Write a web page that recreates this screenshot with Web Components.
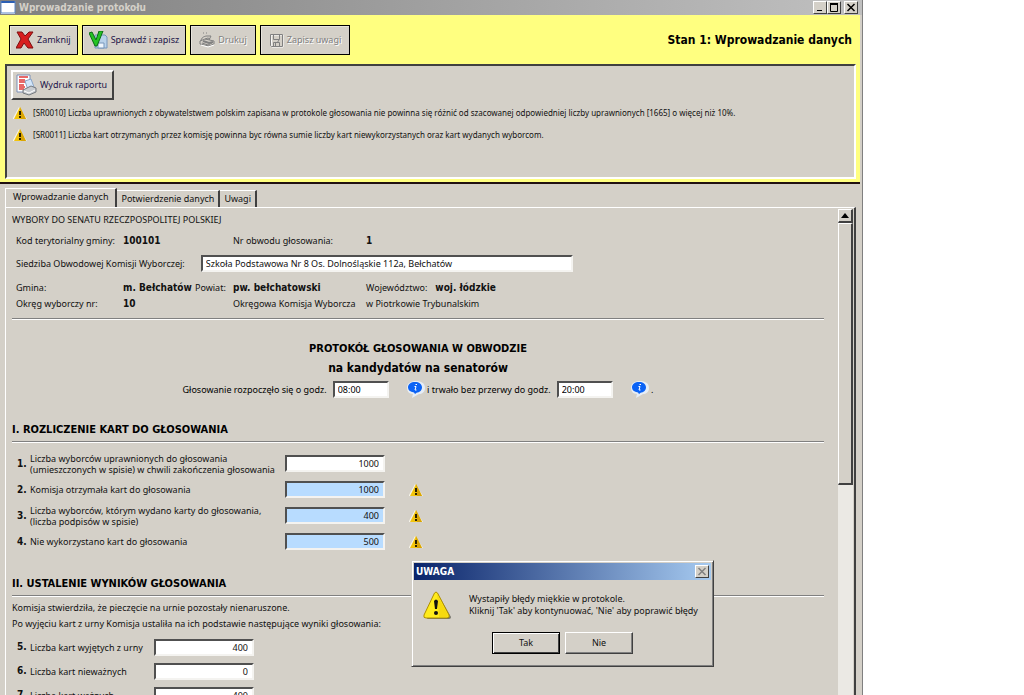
<!DOCTYPE html>
<html lang="pl">
<head>
<meta charset="utf-8">
<title>Wprowadzanie protokołu</title>
<style>
  html, body { height: 100%; margin: 0; }
  body {
    --face: #d4d0c8;
    --shadow: #808080;
    --dark: #404040;
    --bold: bold 10px/12px "DejaVu Sans Condensed", "DejaVu Sans", sans-serif;
    --head: bold 11px/14px "DejaVu Sans Condensed", "DejaVu Sans", sans-serif;
    --large: bold 12px/16px "DejaVu Sans Condensed", "DejaVu Sans", sans-serif;
    background: #fff;
    color: #111;
    font: 9px/12px "Noto Sans", "Open Sans", sans-serif;
    overflow: hidden;
  }
</style>
</head>
<body>
<app-window heading="Wprowadzanie protokołu">
  <action-bar slot="top" state="Stan 1: Wprowadzanie danych">
    <tool-button icon="close" label="Zamknij"></tool-button>
    <tool-button icon="check" label="Sprawdź i zapisz"></tool-button>
    <tool-button icon="print" label="Drukuj" disabled></tool-button>
    <tool-button icon="save" label="Zapisz uwagi" disabled></tool-button>
  </action-bar>
  <message-panel slot="top">
    <message-line>[SR0010] Liczba uprawnionych z obywatelstwem polskim zapisana w protokole głosowania nie powinna się różnić od szacowanej odpowiedniej liczby uprawnionych [1665] o więcej niż 10%.</message-line>
    <message-line>[SR0011] Liczba kart otrzymanych przez komisję powinna byc równa sumie liczby kart niewykorzystanych oraz kart wydanych wyborcom.</message-line>
  </message-panel>
  <tab-strip></tab-strip>
  <scroll-panel>
    <commission-info></commission-info>
    <protocol-heading></protocol-heading>
    <form-section heading="I. ROZLICZENIE KART DO GŁOSOWANIA">
      <count-field number="1." value="1000">Liczba wyborców uprawnionych do głosowania<br>(umieszczonych w spisie) w chwili zakończenia głosowania</count-field>
      <count-field number="2." value="1000" flagged>Komisja otrzymała kart do głosowania</count-field>
      <count-field number="3." value="400" flagged>Liczba wyborców, którym wydano karty do głosowania,<br>(liczba podpisów w spisie)</count-field>
      <count-field number="4." value="500" flagged>Nie wykorzystano kart do głosowania</count-field>
    </form-section>
    <form-section heading="II. USTALENIE WYNIKÓW GŁOSOWANIA" compact>
      <span slot="intro">Komisja stwierdziła, że pieczęcie na urnie pozostały nienaruszone.</span>
      <span slot="intro">Po wyjęciu kart z urny Komisja ustaliła na ich podstawie następujące wyniki głosowania:</span>
      <count-field number="5." value="400" narrow>Liczba kart wyjętych z urny</count-field>
      <count-field number="6." value="0" narrow>Liczba kart nieważnych</count-field>
      <count-field number="7." value="400" narrow>Liczba kart ważnych</count-field>
    </form-section>
  </scroll-panel>
</app-window>
<alert-dialog heading="UWAGA">Wystapiły błędy miękkie w protokole.<br>Kliknij 'Tak' aby kontynuować, 'Nie' aby poprawić błędy</alert-dialog>

<script>
const reset = `
  :host, *, *::before, *::after { box-sizing: border-box; }
  button, input { font: inherit; color: inherit; margin: 0; border-radius: 0; }
  b { font: var(--bold); }
  svg { display: block; flex: none; }
`;

const define = (name, render) => customElements.define(name, class extends HTMLElement {
  connectedCallback() {
    if (this.shadowRoot) return;
    const template = document.createElement('template');
    template.innerHTML = render(this);
    this.attachShadow({ mode: 'open' }).append(template.content.cloneNode(true));
  }
});

const icons = {
  close: `<svg width="18" height="18" viewBox="0 0 18 18"><path d="M1 1h5l3 4 4-4h4l-5 7 5 9h-5l-4-5-3 5H0l5-9z" fill="#d81e1e" stroke="#7c1010"/></svg>`,
  check: `<svg width="19" height="18" viewBox="0 0 19 18"><path d="M6 4h10l2 2v11H6z" fill="#b9d2ea" stroke="#7796bb"/><path d="M9 12h6v5H9z" fill="#eef5fc" stroke="#7796bb"/><path d="M0 2l3-1 4 8 3-9h4L8 15H6z" fill="#24c424" stroke="#0b6b16"/></svg>`,
  print: `<svg width="16" height="16" viewBox="0 0 16 16" fill="none" stroke="#808080"><path d="M4 1h1M7 1h1M2 9c0-3 3-5 6-5h4l-2 4M1 9l5-2 9 2v3l-5 2-9-2zM3 11l6 2 4-2M6 7l3-1 2 1"/><path d="M4 9l6 2 4-1" stroke-width="2"/><path d="M2 13l7 2 6-2" stroke="#fff"/></svg>`,
  save: `<svg width="15" height="15" viewBox="0 0 15 15" fill="none"><path d="M2 2h12v12H3z" stroke="#fff"/><path d="M1.500 1.500h12v12h-11l-1-1zM4.500 1.500v5h6v-5M4.500 13.500v-4h6v4M6.500 10v3M10 7l-2 3" stroke="#808080"/></svg>`,
  report: `<svg width="21" height="22" viewBox="0 0 21 22"><path d="M1 1h13v17H1z" fill="#fff" stroke="#7c8fb5"/><path d="M3 3h9M3 6h6M3 8h8M3 11h5M3 13h6M3 15h5" stroke="#e03838" stroke-width="1.5"/><path d="M9 7l6-2 3 8-6 3z" fill="#d2e6fa" stroke="#8aa5c8"/><path d="M7 16l8-4 5 2v4l-7 3-6-2z" fill="#c8ccd0" stroke="#74797e"/><path d="M8 17l5 2 6-3" fill="none" stroke="#fff"/></svg>`
};

define('warn-icon', el => el.hasAttribute('large')
  ? `<style>:host{display:block}svg{display:block}</style>
  <svg width="28" height="28" viewBox="0 0 28 28" role="img" aria-label="Ostrzeżenie">
    <path d="M15 3L28 26q0 2-2 2H4z" fill="#77756c"/>
    <path d="M11.5 2q1.500-2 3 0L26 24q1 3-2 3H3q-3 0-2-3z" fill="#ffec1c" stroke="#b09000"/>
    <path d="M14 3l11 21q0 2-2 2h-7z" fill="#f0c800" opacity=".5"/>
    <path d="M11 10q2-3 4 0l-1 8h-2z" fill="#111"/><circle cx="13" cy="22" r="2" fill="#111"/>
  </svg>`
  : `<style>:host{display:block}svg{display:block}</style>
  <svg width="14" height="14" viewBox="0 0 14 14" role="img" aria-label="Ostrzeżenie">
    <path d="M6 1L0 12v1h14z" fill="#f6f4ea"/>
    <path d="M7 1l6 12H1z" fill="#f2c40e"/>
    <path d="M7 1l6 12H8z" fill="#d9a404"/>
    <path d="M7 5v4M7 10v2" stroke="#2a2000" stroke-width="2"/>
  </svg>`);

define('info-icon', () => `<style>:host{display:block}svg{display:block}</style>
  <svg width="18" height="17" viewBox="0 0 18 17" role="img" aria-label="Informacja">
    <path d="M9 0c5 0 9 2 9 7 0 4-3 6-6 6l-7 4 1-4C2 13 0 10 0 7c0-5 4-7 9-7z" fill="#e6edf6"/>
    <path d="M8 1c4 0 7 2 7 5.500 0 3-3 5-5 5L8 13l-1-1.500C3 11 1 9 1 6.500 1 3 4 1 8 1z" fill="#0a62f5"/>
    <path d="M8.500 3.500H10M7.500 5.500H9L8 9h1.500" fill="none" stroke="#fff"/>
  </svg>`);

define('app-window', el => `<style>${reset}
  :host { display: flex; flex-direction: column; height: 100vh; margin-right: 161px; background: var(--face); border-right: 1px solid var(--shadow); }
  header { flex: none; display: flex; align-items: center; gap: 3px; height: 15px; padding-right: 4px; background: linear-gradient(90deg, #808080, #c0c0c0); color: var(--face); }
  h1 { flex: 1; margin: 0; font: var(--bold); }
  .buttons { display: flex; }
  .buttons button { width: 14px; height: 13px; padding: 0; display: grid; place-items: center; background: var(--face); border: 1px solid; border-color: #fff var(--dark) var(--dark) #fff; }
  .buttons button:last-child { margin-left: 3px; }
  .top { flex: none; margin-right: 2px; padding: 10px 4px 3px 5px; background: #ffff80; border-bottom: 2px solid #201010; }
  main { flex: 1; min-height: 0; display: flex; flex-direction: column; padding: 4px 6px 0 5px; overflow: hidden; }
</style>
<header>
  <svg width="16" height="14"><path d="M1 0h14v13H1z" fill="#fff"/><path d="M1 0h14v2H1z" fill="#2b5fb4"/><path d="M1 0v12h14V0" fill="none" stroke="#5c86c4"/></svg>
  <h1>${el.getAttribute('heading')}</h1>
  <div class="buttons">
    <button aria-label="Minimalizuj"><svg width="10" height="9"><path d="M2 7.500h5" stroke="#000"/></svg></button>
    <button aria-label="Maksymalizuj"><svg width="10" height="9"><path d="M1 1h8M1.500 1v7.500h7V1" fill="none" stroke="#000"/><path d="M1 1h8" stroke="#000" stroke-width="2"/></svg></button>
    <button aria-label="Zamknij okno"><svg width="10" height="9"><path d="M1.500 1l7 7M8.500 1l-7 7" stroke="#000" stroke-width="1.500"/></svg></button>
  </div>
</header>
<div class="top"><slot name="top"></slot></div>
<main><slot></slot></main>`);

define('action-bar', el => `<style>${reset}
  :host { display: flex; align-items: center; gap: 4px; margin-bottom: 9px; padding: 0 4px; }
  h2 { flex: 1; margin: 0; text-align: right; font: var(--large); color: #000; white-space: nowrap; }
</style><slot></slot><h2>${el.getAttribute('state')}</h2>`);

define('tool-button', el => `<style>${reset}
  :host { display: block; }
  button { display: flex; align-items: center; gap: 3px; height: 30px; padding: 0 6px; background: var(--face); border: 1px solid #000; color: #1c1448; white-space: nowrap; box-shadow: inset 1px 1px #e8e5dd; }
  button:disabled { padding: 0 8px; color: var(--shadow); text-shadow: 1px 1px #fff; }
  :host([raised]) button { border: 2px solid; border-color: #fff var(--dark) var(--dark) #fff; padding: 0 5px 0 3px; box-shadow: none; }
</style><button ${el.hasAttribute('disabled') ? 'disabled' : ''}>${icons[el.getAttribute('icon')]}<span>${el.getAttribute('label')}</span></button>`);

define('message-panel', () => `<style>${reset}
  :host { display: block; height: 115px; padding: 4px; background: var(--face); border: 2px solid; border-color: var(--dark) #fff #fff var(--dark); }
  .list { display: grid; gap: 8px; margin-top: 6px; }
  tool-button { width: max-content; }
</style><tool-button raised icon="report" label="Wydruk raportu"></tool-button><div class="list"><slot></slot></div>`);

define('message-line', () => `<style>${reset}
  :host { display: flex; align-items: center; gap: 6px; height: 14px; padding-left: 2px; white-space: nowrap; font-size: 8px; }
</style><warn-icon></warn-icon><span><slot></slot></span>`);

define('tab-strip', () => `<style>${reset}
  :host { flex: none; display: flex; align-items: flex-end; }
  button { height: 17px; padding: 0 4px; background: var(--face); border: solid; border-width: 1px 2px 0 0; border-color: #fff var(--dark) #fff #fff; white-space: nowrap; }
  button[aria-selected=true] { height: 19px; padding: 0 7px 2px; border-left-width: 1px; }
</style>
<button role="tab" aria-selected="true">Wprowadzanie danych</button><button role="tab" aria-selected="false">Potwierdzenie danych</button><button role="tab" aria-selected="false">Uwagi</button>`);

define('scroll-panel', () => `<style>${reset}
  :host { flex: 1; min-height: 0; display: flex; border: solid; border-width: 1px 2px 0 1px; border-color: #fff var(--dark) #fff #fff; }
  .content { flex: 1; min-width: 0; padding: 6px 14px 0 6px; overflow: hidden; }
  .bar { flex: none; width: 15px; margin: 1px 1px 0 0; display: flex; flex-direction: column; background: #ebe9e4; }
  .bar button { height: 14px; padding: 0; display: grid; place-items: center; }
  .bar button, .thumb { background: var(--face); border: solid; border-width: 1px 2px 2px 1px; border-color: #fff var(--dark) var(--dark) #fff; }
  .thumb { height: 54%; }
</style>
<div class="content"><slot></slot></div>
<div class="bar"><button aria-label="Przewiń w górę"><svg width="8" height="5"><path d="M4 0l4 5H0z" fill="#000"/></svg></button><div class="thumb"></div></div>`);

const sunken = `border: 2px solid; border-color: #505050 #f4f3f0 #f4f3f0 #505050;`;

define('commission-info', () => `<style>${reset}
  :host { display: block; border-bottom: 1px solid #fff; white-space: nowrap; }
  .inner { border-bottom: 1px solid var(--shadow); padding-bottom: 8px; }
  h3 { margin: 0 0 9px; font: inherit; }
  .row { display: grid; grid-template-columns: 107px 72px 38px 133px auto; padding-left: 4px; margin-bottom: 4px; }
  .seat { display: flex; align-items: center; gap: 16px; padding-left: 4px; margin: 8px 0 10px; }
  .row:last-child { margin: 0; }
  input { width: 372px; height: 17px; padding: 0 3px; background: #fff; ${sunken} }
  .wide { grid-column: span 2; }
  .pair { display: flex; gap: 8px; }
</style>
<div class="inner">
  <h3>WYBORY DO SENATU RZECZPOSPOLITEJ POLSKIEJ</h3>
  <div class="row"><span>Kod terytorialny gminy:</span><b class="wide">100101</b><span>Nr obwodu głosowania:</span><b>1</b></div>
  <div class="seat"><label for="seat">Siedziba Obwodowej Komisji Wyborczej:</label><input id="seat" value="Szkoła Podstawowa Nr 8 Os. Dolnośląskie 112a, Bełchatów"></div>
  <div class="row"><span>Gmina:</span><b>m. Bełchatów</b><span>Powiat:</span><b>pw. bełchatowski</b><span class="pair">Województwo: <b>woj. łódzkie</b></span></div>
  <div class="row"><span>Okręg wyborczy nr:</span><b class="wide">10</b><span>Okręgowa Komisja Wyborcza</span><span>w Piotrkowie Trybunalskim</span></div>
</div>`);

define('protocol-heading', () => `<style>${reset}
  :host { display: block; padding-top: 22px; text-align: center; white-space: nowrap; color: #000; }
  h2 { margin: 0 0 4px; font: var(--head); }
  h3 { margin: 0 0 5px; font: var(--large); }
  .times { display: flex; justify-content: center; align-items: center; }
  input { width: 56px; height: 17px; margin: 0 18px 0 6px; padding: 0 3px; background: #fff; ${sunken} }
</style>
<h2>PROTOKÓŁ GŁOSOWANIA W OBWODZIE</h2>
<h3>na kandydatów na senatorów</h3>
<div class="times"><label for="from">Głosowanie rozpoczęło się o godz.</label><input id="from" value="08:00"><info-icon></info-icon><label for="to">&nbsp;i trwało bez przerwy do godz.</label><input id="to" value="20:00"><info-icon></info-icon><span>&nbsp;.</span></div>`);

define('form-section', el => `<style>${reset}
  :host { display: block; margin-top: 25px; }
  h2 { margin: 0; padding-bottom: 4px; font: var(--head); color: #000; border-bottom: 1px solid var(--shadow); }
  .intro { display: grid; gap: 4px; padding-top: 8px; border-top: 1px solid #fff; white-space: nowrap; }
  .rows { display: grid; gap: 1px; }
  :host([compact]) { margin-top: 23px; }
  :host([compact]) .intro { padding: 5px 0; }
  :host([compact]) .rows { gap: 0; }
</style>
<h2>${el.getAttribute('heading')}</h2><div class="intro"><slot name="intro"></slot></div><div class="rows"><slot></slot></div>`);

define('count-field', el => `<style>${reset}
  :host { display: grid; grid-template-columns: 13px 255px 100px auto; align-items: center; height: 25px; padding-left: 5px; white-space: nowrap; }
  :host([narrow]) { grid-template-columns: 13px 124px 100px auto; height: 24px; }
  label { line-height: 11px; }
  input { width: 100%; height: 17px; padding: 0 4px; text-align: right; background: #fff; ${sunken} }
  :host([flagged]) input { background: #b8dcff; }
  warn-icon { margin-left: 24px; }
</style>
<b>${el.getAttribute('number')}</b><label for="value"><slot></slot></label><input id="value" value="${el.getAttribute('value')}">${el.hasAttribute('flagged') ? '<warn-icon></warn-icon>' : ''}`);

define('alert-dialog', el => `<style>${reset}
  :host { position: absolute; left: 411px; top: 560px; width: 303px; padding: 2px; background: var(--face); border: 1px solid; border-color: var(--face) var(--dark) var(--dark) var(--face); box-shadow: inset 1px 1px #fff, inset -1px -1px var(--shadow); }
  header { display: flex; align-items: center; height: 17px; padding: 0 2px; background: linear-gradient(90deg, #0a246a, #a6caf0); color: #fff; }
  h2 { flex: 1; margin: 0; font: var(--bold); }
  header button { width: 14px; height: 13px; padding: 0; display: grid; place-items: center; background: var(--face); border: 1px solid; border-color: #fff var(--dark) var(--dark) #fff; }
  .body { display: flex; align-items: center; gap: 18px; padding: 11px 0 0 9px; }
  p { margin: 0; white-space: nowrap; }
  .actions { display: flex; justify-content: center; gap: 5px; padding: 13px 0 10px; }
  .actions button { width: 68px; height: 22px; padding: 0; background: var(--face); border: 1px solid; border-color: #fff var(--dark) var(--dark) #fff; box-shadow: inset -1px -1px var(--shadow); }
  .actions .default { border-color: #000; box-shadow: inset 1px 1px #fff, inset -1px -1px var(--dark); }
</style>
<header><h2>${el.getAttribute('heading')}</h2><button aria-label="Zamknij"><svg width="10" height="9"><path d="M1.500 1l7 7M8.500 1l-7 7" stroke="#808080" stroke-width="1.500"/></svg></button></header>
<div class="body"><warn-icon large></warn-icon><p><slot></slot></p></div>
<div class="actions"><button class="default">Tak</button><button>Nie</button></div>`);
</script>
</body>
</html>
